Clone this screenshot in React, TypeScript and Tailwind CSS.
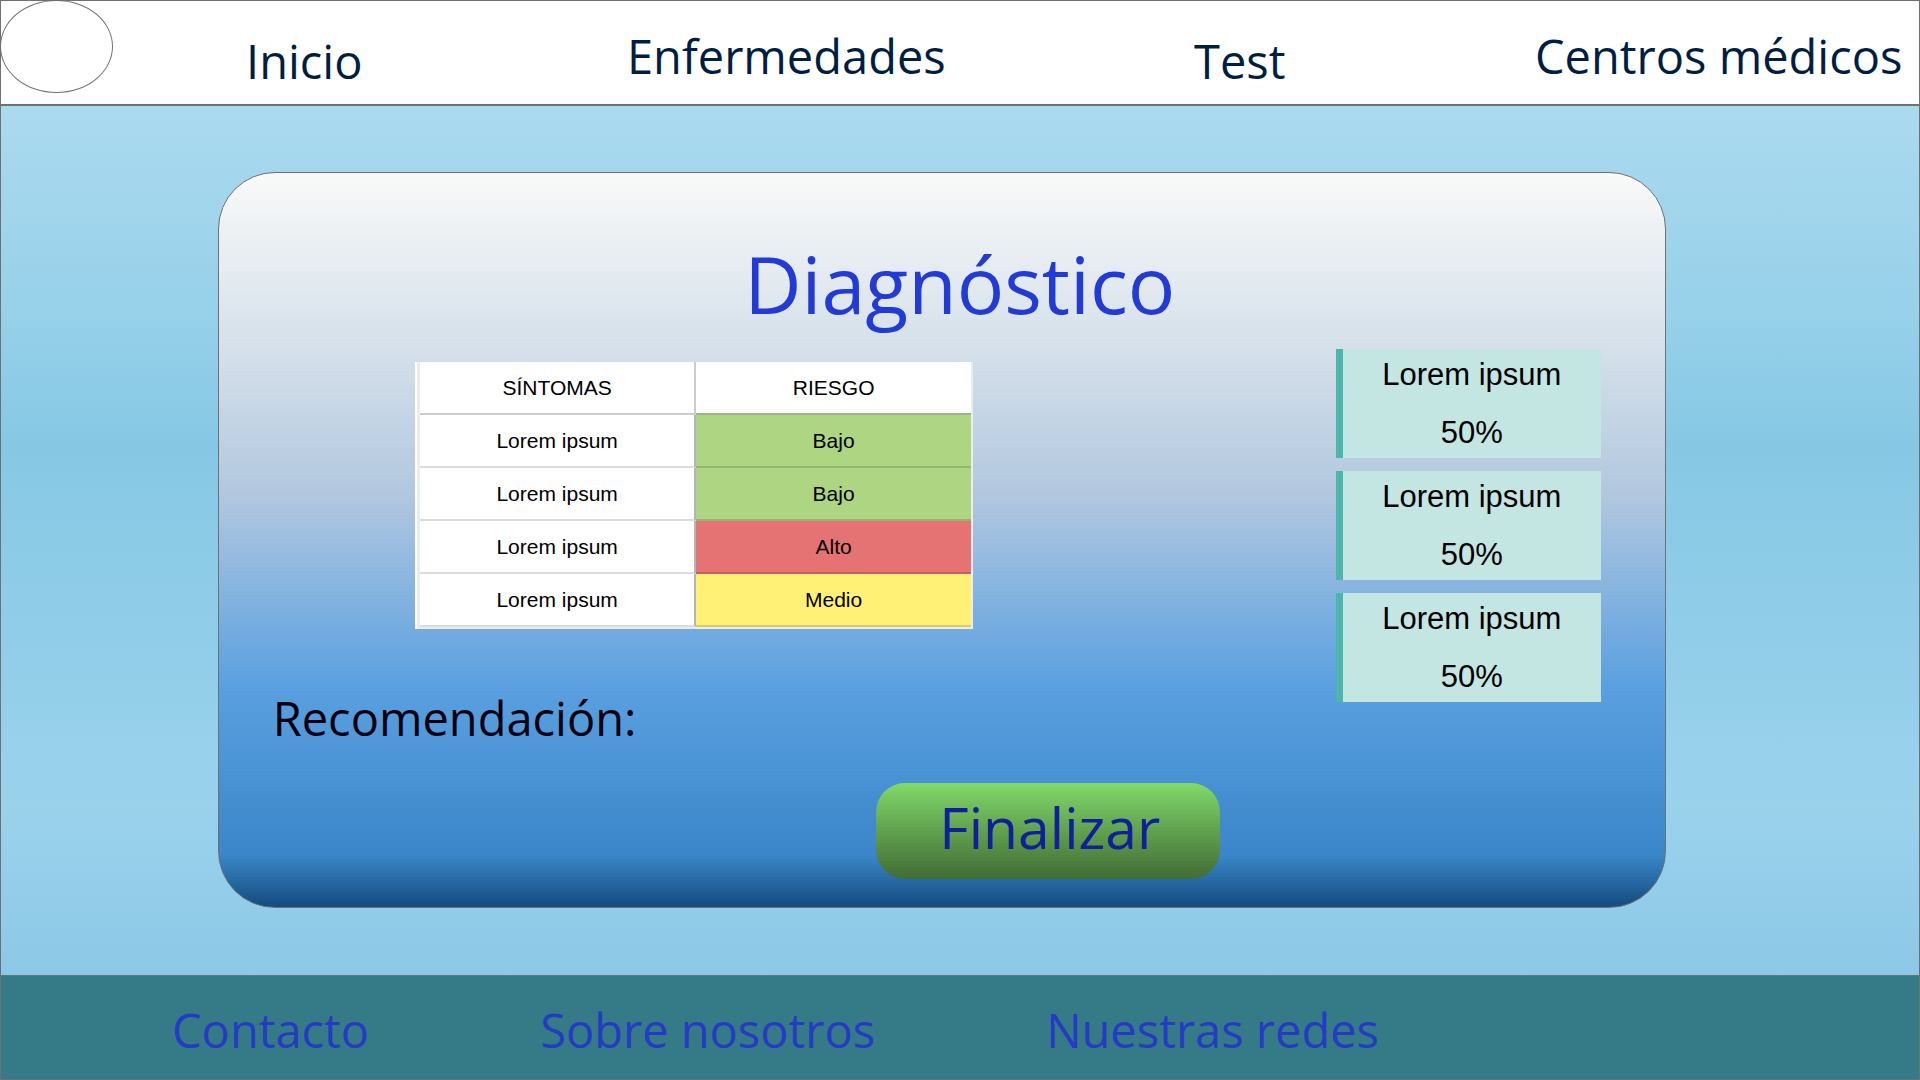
const navLinks = [
  { label: 'Inicio', place: 'pt-6' },
  { label: 'Enfermedades', place: 'pt-3.5' },
  { label: 'Test', place: 'pt-6' },
  { label: 'Centros médicos', place: 'pt-3.5' },
];

const symptoms = [
  { name: 'Lorem ipsum', risk: 'Bajo', color: 'bg-[#aed581]' },
  { name: 'Lorem ipsum', risk: 'Bajo', color: 'bg-[#aed581]' },
  { name: 'Lorem ipsum', risk: 'Alto', color: 'bg-[#e57373]' },
  { name: 'Lorem ipsum', risk: 'Medio', color: 'bg-[#fff176]' },
];

const results = [
  { name: 'Lorem ipsum', value: '50%' },
  { name: 'Lorem ipsum', value: '50%' },
  { name: 'Lorem ipsum', value: '50%' },
];

const footerLinks = ['Contacto', 'Sobre nosotros', 'Nuestras redes'];

function Header() {
  return (
    <header className="grid grid-cols-[245fr_381fr_567fr_341fr_384fr] border-b-2 border-[#707070] bg-white">
      <a
        href="#inicio"
        aria-label="Logo"
        className="-ml-px -mt-px h-[93px] w-[113px] rounded-[50%] border border-[#707070]"
      />
      {navLinks.map((link) => (
        <a
          key={link.label}
          href="#nav"
          className={`flex h-[103px] items-center whitespace-nowrap pb-2 text-[47px] leading-[68px] text-[#001e42] ${link.place}`}
        >
          {link.label}
        </a>
      ))}
    </header>
  );
}

function SymptomTable() {
  return (
    <div className="mt-[13px] w-[558px] border-l-2 border-white bg-[#ececec] pb-0.5 pl-[3px] pr-0.5">
      <table className="h-[265px] w-full table-fixed border-separate border-spacing-0 bg-white text-center font-['Liberation_Sans',sans-serif] text-[21px] leading-6 text-black">
        <thead>
          <tr className="h-[53px]">
            <th scope="col" className="border-b-2 border-r-2 border-[#cccccc] font-normal">SÍNTOMAS</th>
            <th scope="col" className="border-b-2 border-[#9fb585] font-normal">RIESGO</th>
          </tr>
        </thead>
        <tbody>
          {symptoms.map((row, i) => (
            <tr key={i} className="h-[53px]">
              <td className="border-b-2 border-r-2 border-[#dcdcdc] border-r-[#b4b4b4]">{row.name}</td>
              <td className={`border-b-2 border-black/15 ${row.color}`}>{row.risk}</td>
            </tr>
          ))}
        </tbody>
      </table>
    </div>
  );
}

function ResultCards() {
  return (
    <ul className="flex w-[265px] flex-col gap-[13px]">
      {results.map((item, i) => (
        <li
          key={i}
          className="flex h-[109px] flex-col items-center justify-center border-l-[7px] border-[#4db6ac] bg-[#c4e6e2] font-['Liberation_Sans',sans-serif] text-[31px] leading-[58px] text-black"
        >
          <span>{item.name}</span>
          <span>{item.value}</span>
        </li>
      ))}
    </ul>
  );
}

export default function App() {
  return (
    <div className="flex min-h-screen flex-col border border-[#707070] bg-[linear-gradient(180deg,#b4def2_0%,#aadaef_10%,#98d1ea_28%,#86c8e4_41%,#9ad2ec_75%,#8cc8e7_90%)] font-['Open_Sans','Noto_Sans',sans-serif]">
      <Header />
      <main className="flex flex-1 flex-col pb-[67px] pl-[11.3%] pr-[13.2%] pt-[66px]">
        <section className="flex-1 rounded-[57px] border border-[#707070] bg-[linear-gradient(180deg,#f9f9f9_0%,#d5e0ea_24%,#b1c7df_44%,#5aa0e0_70%,#3a86c8_93%,#134b7d_100%)]">
          <h1 className="pl-9 pt-14 text-center text-[79px] leading-[110px] text-[#223ad8]">Diagnóstico</h1>
          <div className="mt-[10px] flex items-start justify-between pl-[13.6%] pr-[64px]">
            <SymptomTable />
            <ResultCards />
          </div>
          <h2 className="-mt-[18px] pl-[54px] text-[47px] leading-[68px] text-[#09000f]">Recomendación:</h2>
          <div className="mt-[31px] flex justify-center pl-[212px]">
            <button
              type="button"
              className="h-24 w-[344px] rounded-[29px] bg-linear-to-b from-[#82d96a] to-[#416d35] pb-2 pl-1 text-[57px] leading-[82px] text-[#101f9c]"
            >
              Finalizar
            </button>
          </div>
        </section>
      </main>
      <footer className="flex h-[104px] items-center gap-[171px] border-t border-[#707070] bg-[#347a87] pl-[171px] pt-1 text-[47px] leading-[68px] text-[#263bc4]">
        {footerLinks.map((label) => (
          <a key={label} href="#pie" className="whitespace-nowrap">
            {label}
          </a>
        ))}
      </footer>
    </div>
  );
}
